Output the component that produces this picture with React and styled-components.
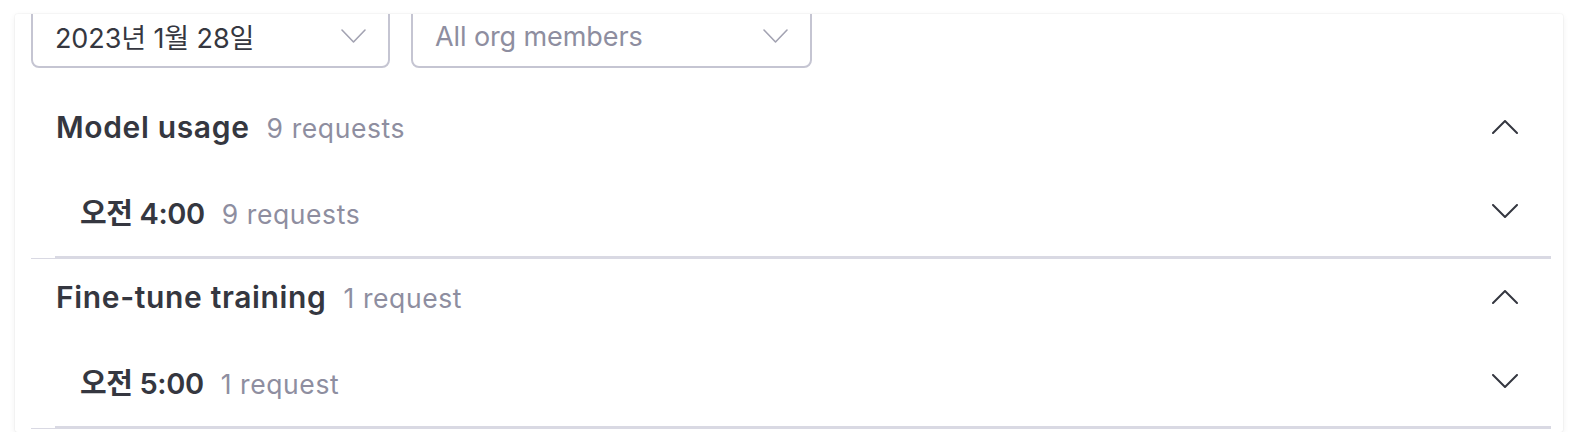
import React from "react";
import styled, { createGlobalStyle } from "styled-components";

const GlobalStyle = createGlobalStyle`
  html, body {
    margin: 0;
    padding: 0;
    background: #ffffff;
  }
  body {
    font-family: Inter, "Noto Sans CJK KR", "Noto Sans", sans-serif;
    color: #353740;
    -webkit-font-smoothing: antialiased;
  }
`;

const Page = styled.div`
  padding: 14px 15px 0 15px;
`;

const Card = styled.div`
  width: 1548px;
  box-sizing: border-box;
  background: #fff;
  border-radius: 3px;
  box-shadow: 0 0 0 1px rgba(0, 0, 0, 0.025), 0 2px 6px rgba(0, 0, 0, 0.07);
  overflow: hidden;
  padding: 0 12px 3px 16px;
`;

const Filters = styled.div`
  display: flex;
  gap: 21px;
  margin-top: -10px;
`;

const Select = styled.div`
  display: flex;
  align-items: center;
  justify-content: space-between;
  box-sizing: border-box;
  width: ${(p) => p.width}px;
  height: 64px;
  padding: 0 22px 0 22px;
  border: 2px solid #c5c5d2;
  border-radius: 8px;
  font-size: 27px;
  color: ${(p) => (p.placeholder ? "#8e8ea0" : "#353740")};
  letter-spacing: -0.1px;
`;

const Group = styled.section`
  border-bottom: 1px solid #d9d9e3;
  margin-top: ${(p) => (p.first ? "21px" : "0")};
`;

const Header = styled.div`
  display: flex;
  align-items: center;
  justify-content: space-between;
  height: 76px;
  padding: 0 33px 0 25px;
`;

const Row = styled.div`
  display: flex;
  align-items: center;
  justify-content: space-between;
  height: 91px;
  margin-left: 24px;
  padding: 0 33px 0 25px;
  border-bottom: 2px solid #d9d9e3;
`;

const Label = styled.div`
  display: flex;
  align-items: baseline;
  gap: 17px;
`;

const Title = styled.span`
  font-size: ${(p) => (p.time ? "29px" : "30px")};
  font-weight: 600;
  color: #353740;
  letter-spacing: ${(p) => (p.time ? "-0.4px" : "0.65px")};
`;

const Count = styled.span`
  font-size: 26.5px;
  font-weight: 400;
  color: #8e8ea0;
  letter-spacing: 0.6px;
`;

const Chevron = ({ up, color = "#353740", width = 2, w = 26, h = 14 }) => (
  <svg width={w} height={h} viewBox={`0 0 ${w} ${h}`} fill="none">
    <polyline
      points={up ? `1,${h - 1} ${w / 2},1 ${w - 1},${h - 1}` : `1,1 ${w / 2},${h - 1} ${w - 1},1`}
      stroke={color}
      strokeWidth={width}
      strokeLinecap="round"
      strokeLinejoin="round"
    />
  </svg>
);

const groups = [
  { title: "Model usage", count: "9 requests", rows: [{ time: "오전 4:00", count: "9 requests" }] },
  { title: "Fine-tune training", count: "1 request", rows: [{ time: "오전 5:00", count: "1 request" }] },
];

export default function App() {
  return (
    <>
      <GlobalStyle />
      <Page>
        <Card>
          <Filters>
            <Select width={359}>
              <span>2023년 1월 28일</span>
              <Chevron color="#a3a3b2" width={1.6} w={25} h={14} />
            </Select>
            <Select width={401} placeholder>
              <span>All org members</span>
              <Chevron color="#a3a3b2" width={1.6} w={25} h={14} />
            </Select>
          </Filters>
          {groups.map((g, i) => (
            <Group key={g.title} first={i === 0}>
              <Header>
                <Label>
                  <Title>{g.title}</Title>
                  <Count>{g.count}</Count>
                </Label>
                <Chevron up />
              </Header>
              {g.rows.map((r) => (
                <Row key={r.time}>
                  <Label>
                    <Title time>{r.time}</Title>
                    <Count>{r.count}</Count>
                  </Label>
                  <Chevron />
                </Row>
              ))}
            </Group>
          ))}
        </Card>
      </Page>
    </>
  );
}
